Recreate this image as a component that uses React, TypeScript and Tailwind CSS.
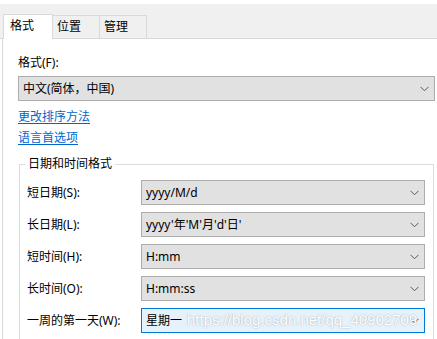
import { useState } from "react";

const Chevron = () => (
  <svg width="9" height="6" viewBox="0 0 9 6" className="shrink-0">
    <path d="M0.5 0.8 L4.5 4.8 L8.5 0.8" fill="none" stroke="#5a5a5a" strokeWidth="1" />
  </svg>
);

interface ISelectProps {
  value: string;
  focused?: boolean;
  className?: string;
}

const FakeSelect = ({ value, focused, className }: ISelectProps) => (
  <div
    className={`h-[25px] flex items-center justify-between pl-[4px] pr-[5px] border ${
      focused ? "bg-[#e5f1fb] border-[#0078d7]" : "bg-[#e1e1e1] border-[#adadad]"
    } ${className ?? ""}`}
  >
    <span className="text-black whitespace-nowrap">{value}</span>
    <Chevron />
  </div>
);

const rows = [
  { label: "短日期(S):", value: "yyyy/M/d" },
  { label: "长日期(L):", value: "yyyy'年'M'月'd'日'" },
  { label: "短时间(H):", value: "H:mm" },
  { label: "长时间(O):", value: "H:mm:ss" },
  { label: "一周的第一天(W):", value: "星期一" },
];

const tabs = ["格式", "位置", "管理"];

const App = () => {
  const [active] = useState(0);

  return (
    <div className="relative w-[437px] h-[339px] overflow-hidden bg-white text-[12px] leading-[16px] text-black font-['Segoe_UI','Noto_Sans','Noto_Sans_CJK_SC',sans-serif]">
      {/* tab strip */}
      <div className="mt-[4px] h-[35px] bg-[#f0f0f0] border-b border-[#d9d9d9] flex items-end pl-[3px]">
        {tabs.map((t, i) =>
          i === active ? (
            <div
              key={t}
              className="w-[50px] h-[25px] -mb-px bg-white border border-b-0 border-[#d9d9d9] pl-[6px] pt-[3px]"
            >
              {t}
            </div>
          ) : (
            <div
              key={t}
              className="w-[47px] h-[23px] bg-[#f0f0f0] border border-l-0 border-b-0 border-[#d9d9d9] pl-[4px] pt-[3px]"
            >
              {t}
            </div>
          )
        )}
      </div>

      {/* panel */}
      <div className="ml-[2px] h-[300px] border-l border-[#d9d9d9] pl-[15px] pr-[2px] pt-[16px]">
        <div>格式(F):</div>
        <FakeSelect value="中文(简体，中国)" className="mt-[5px]" />

        <div className="mt-[8px]">
          <a className="text-[#0066cc] underline underline-offset-2">更改排序方法</a>
        </div>
        <div className="mt-[5px]">
          <a className="text-[#0066cc] underline underline-offset-2">语言首选项</a>
        </div>

        {/* group box */}
        <fieldset className="mt-[10px] ml-px mr-px border border-[#dcdcdc] pl-[5px] pr-[8px] pb-[20px]">
          <legend className="px-[3px]">日期和时间格式</legend>
          <div className="mt-[8px] flex flex-col gap-[7px] ml-[2px]">
            {rows.map((r, i) => (
              <div key={r.label} className="flex items-center">
                <div className="w-[114px] whitespace-nowrap">{r.label}</div>
                <FakeSelect value={r.value} focused={i === rows.length - 1} className="flex-1" />
              </div>
            ))}
          </div>
        </fieldset>
      </div>

      {/* watermark */}
      <div className="absolute left-[187px] top-[311px] text-[15px] leading-[18px] text-white whitespace-nowrap font-['Liberation_Sans',sans-serif] [text-shadow:0_0_1.5px_rgba(0,0,0,0.35)]">
        https://blog.csdn.net/qq_40902709
      </div>
    </div>
  );
};

export default App;
